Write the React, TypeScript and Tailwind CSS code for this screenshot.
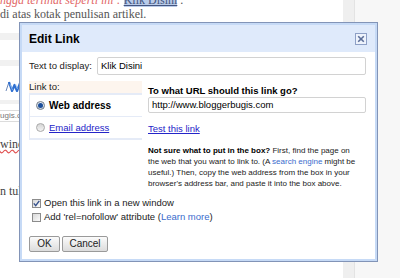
import React from "react";

function Radio({ checked }: { checked?: boolean }) {
  return (
    <span
      className={
        "flex h-[9px] w-[9px] shrink-0 items-center justify-center rounded-full border " +
        (checked
          ? "border-[#6f7a86] bg-linear-to-b from-[#e9eef5] to-[#c9d3df]"
          : "border-[#a9a9a9] bg-linear-to-b from-[#d5d5d5] to-[#f4f4f4]")
      }
    >
      {checked && <span className="h-[5px] w-[5px] rounded-full bg-[#1d4f9a]" />}
    </span>
  );
}

function Check({ checked }: { checked?: boolean }) {
  return (
    <span className="flex h-[9px] w-[9px] shrink-0 items-center justify-center border border-[#8c8c8c] bg-linear-to-br from-[#d8d8d8] to-[#fbfbfb]">
      {checked && (
        <svg width="7" height="7" viewBox="0 0 7 7">
          <path d="M0.8 3.4 L2.7 5.6 L6.3 0.9" stroke="#34508c" strokeWidth="1.4" fill="none" />
        </svg>
      )}
    </span>
  );
}

function CloseBtn() {
  return (
    <span className="flex h-[12px] w-[12px] items-center justify-center border border-[#8ea0c6] bg-[#eef3fc]">
      <svg width="8" height="8" viewBox="0 0 8 8">
        <path d="M1.2 1.2 L6.8 6.8 M6.8 1.2 L1.2 6.8" stroke="#5b6e98" strokeWidth="1.6" />
      </svg>
    </span>
  );
}

export default function App() {
  return (
    <div className="relative h-[278px] w-[400px] overflow-hidden bg-white">
      {/* background page */}
      <div className="flex h-[278px]">
        <div className="flex w-[343px] flex-col overflow-hidden bg-white font-['Liberation_Serif',serif] text-[12px]">
          <div className="mt-[-7px] whitespace-nowrap leading-[14px]">
            <span className="italic text-[#e26767]">ngga terlihat seperti ini : </span>
            <span className="bg-[#b9cbe9] text-[#44557f] underline">Klik Disini</span>
            <span className="text-[#555]"> .</span>
          </div>
          <div className="whitespace-nowrap leading-[14px] text-[#555]">di atas kotak penulisan artikel.</div>
          <div className="mt-[12px] h-[7px] bg-[#f1f1f1]" />
          <div className="mt-[20px] h-[6px] bg-[#f1f1f1]" />
          <div className="ml-[5px] mt-[15px] h-[11px]">
            <svg width="16" height="11" viewBox="0 0 16 11">
              <path d="M1 10 L4 1" stroke="#6a87b8" strokeWidth="1" fill="none" />
              <path d="M4 1 L7 10 L9.5 4 L12 10 L15.5 1" stroke="#2f6fd0" strokeWidth="2.2" fill="none" strokeLinejoin="round" />
              <path d="M5 3 L7.5 9 M10.5 3 L12.5 8" stroke="#9cc4f2" strokeWidth="0.8" fill="none" />
            </svg>
          </div>
          <div className="mt-[8px] h-[4px] bg-[#f1f1f1]" />
          <div className="mt-[6px] flex h-[12px] items-center border-y border-[#dcdcdc] font-['Liberation_Sans',sans-serif] text-[8px] text-[#777]">
            ugis.com
          </div>
          <div className="mt-[15px] whitespace-nowrap text-[12px] leading-[14px] text-[#444]">
            <span className="underline decoration-[#e05050] decoration-wavy">window</span>
          </div>
          <div className="mt-[33px] whitespace-nowrap text-[12px] leading-[14px] text-[#444]">n tulisan</div>
        </div>
        <div className="w-[12px] border-r border-[#e3e3e3] bg-[#efefef]" />
        <div className="flex-1 bg-[#f7f7f7]" />
      </div>

      {/* dialog */}
      <div className="absolute left-[19px] top-[22px] h-[240px] w-[359px] border border-[#8294b7] bg-[#c6daf6] p-[2px] font-['Liberation_Sans',Arial,sans-serif] text-[#222]">
        <div className="flex h-full flex-col bg-white">
          <div className="flex h-[27px] shrink-0 items-center justify-between bg-[#dfeafb] pl-[7px] pr-[8px]">
            <span className="text-[12px] font-bold leading-none text-black">Edit Link</span>
            <CloseBtn />
          </div>
          <div className="flex flex-1 flex-col pl-[7px] pr-[9px] pt-[5px] text-[9.5px] leading-[12px]">
            <div className="flex items-center">
              <span className="w-[68px] shrink-0">Text to display:</span>
              <div className="flex h-[18px] flex-1 items-center rounded-[2px] border border-[#d2d2d2] pl-[3px] text-black">
                Klik Disini
              </div>
            </div>

            <div className="mt-[6px] flex">
              <div className="flex w-[113px] shrink-0 flex-col">
                <div className="flex h-[12px] items-center bg-[#fdf5ee]">Link to:</div>
                <div className="flex flex-col bg-[#e5ebf7] pb-[2px] pl-[1px] pt-[2px]">
                  <div className="flex h-[21px] items-center gap-[4px] bg-white pl-[6px]">
                    <Radio checked />
                    <span className="text-[10px] font-bold text-black">Web address</span>
                  </div>
                  <div className="mt-[1px] flex h-[21px] items-center gap-[4px] bg-white pl-[6px]">
                    <Radio />
                    <span className="text-[#2424c8] underline">Email address</span>
                  </div>
                </div>
              </div>

              <div className="ml-[6px] flex w-[219px] flex-col pt-[4px]">
                <div className="font-bold text-black">To what URL should this link go?</div>
                <div className="flex h-[16px] items-center rounded-[2px] border border-[#d2d2d2] pl-[3px] text-black">
                  http://www.bloggerbugis.com
                </div>
                <div className="mt-[10px] text-[#2424c8] underline">Test this link</div>
                <div className="mt-[10px] w-[211px] text-[8px] leading-[11px] text-[#222]">
                  <span className="font-bold text-black">Not sure what to put in the box?</span> First, find the page on
                  the web that you want to link to. (A <span className="text-[#3a6ccd]">search engine</span> might be
                  useful.) Then, copy the web address from the box in your browser's address bar, and paste it into
                  the box above.
                </div>
              </div>
            </div>

            <div className="mt-[7px] flex flex-col leading-[14px]">
              <div className="flex items-center gap-[3px] pl-[3px]">
                <Check checked />
                <span>Open this link in a new window</span>
              </div>
              <div className="flex items-center gap-[3px] pl-[3px]">
                <Check />
                <span>
                  Add 'rel=nofollow' attribute (<span className="text-[#3a6ccd]">Learn more</span>)
                </span>
              </div>
            </div>

            <div className="mt-[12px] flex">
              <button className="flex h-[16px] w-[31px] items-center justify-center rounded-[2px] border border-[#9a9a9a] bg-linear-to-b from-[#fbfbfb] to-[#dcdcdc] text-[10px] leading-none text-[#222]">
                OK
              </button>
              <button className="ml-[2px] flex h-[16px] w-[46px] items-center justify-center rounded-[2px] border border-[#9a9a9a] bg-linear-to-b from-[#fbfbfb] to-[#dcdcdc] text-[10px] leading-none text-[#222]">
                Cancel
              </button>
            </div>
          </div>
        </div>
      </div>
    </div>
  );
}
